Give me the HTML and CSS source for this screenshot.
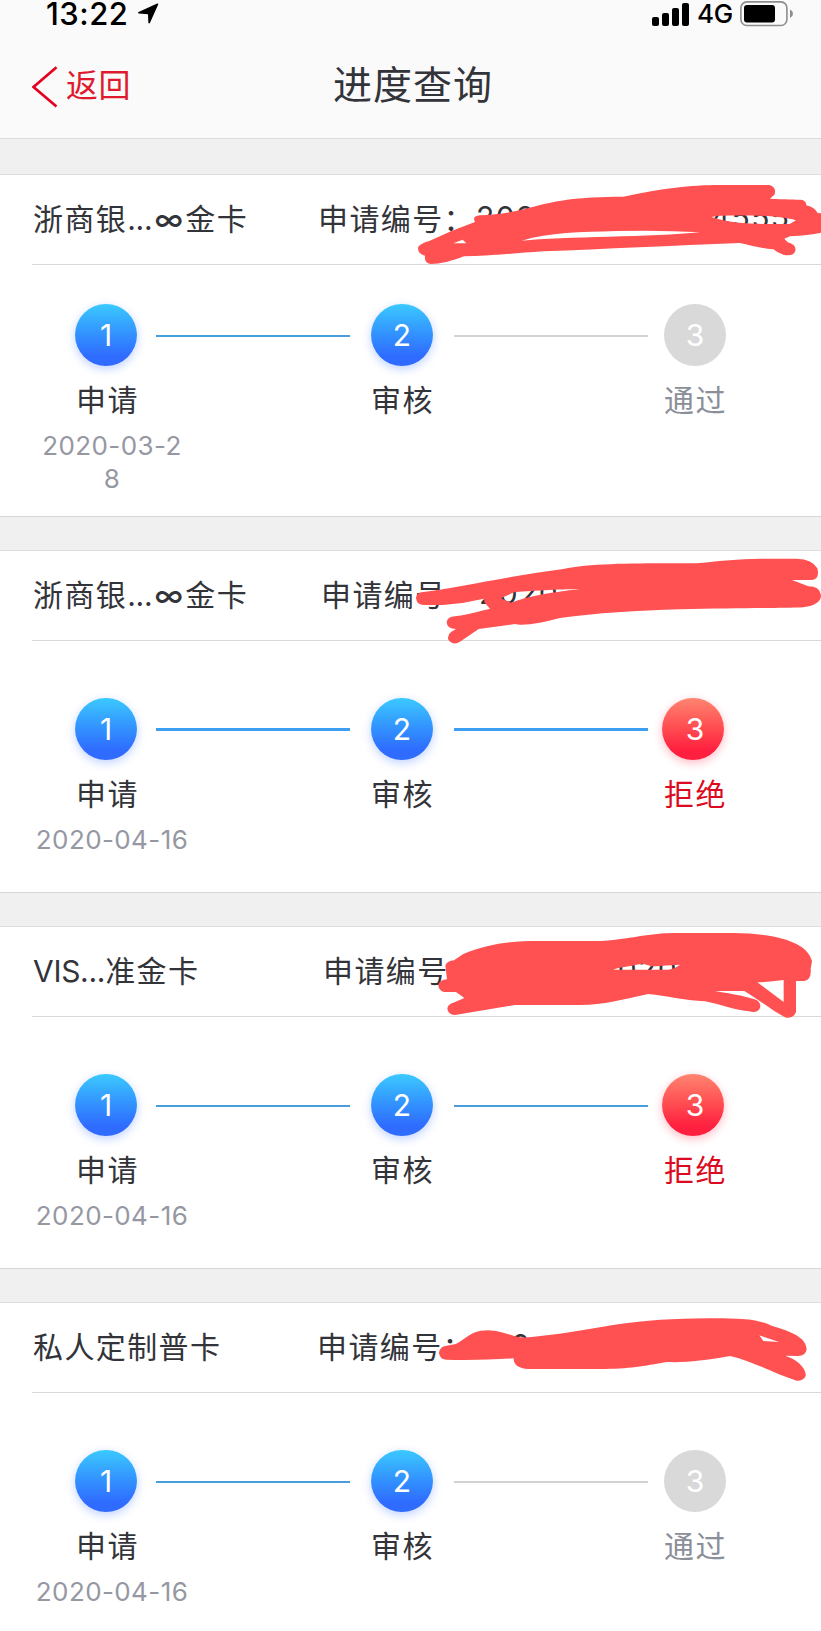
FILE: index.html
```html
<!DOCTYPE html>
<html lang="zh-CN">
<head>
<meta charset="utf-8">
<title>进度查询</title>
<link rel="stylesheet" href="styles.css">
</head>
<body>
<header class="top">
  <div class="status">
    <span class="time">13:22</span>
    <svg class="arrow" width="22" height="22" viewBox="0 0 22 22"><path d="M20.200 .6Q21.600.2 21.200 1.600L13 19.800Q12 21.400 11.300 19.600L11 11.200 1.600 10.600Q.2 9.800 1.600 8.900Z"/></svg>
    <svg class="signal" width="38" height="23" viewBox="0 0 38 23"><rect y="14" width="7" height="9" rx="2"/><rect x="10" y="10" width="7" height="13" rx="2"/><rect x="20" y="5" width="7" height="18" rx="2"/><rect x="30" width="7" height="23" rx="2"/></svg>
    <span class="net">4G</span>
    <svg class="battery" width="54" height="26" viewBox="0 0 54 26"><rect x=".9" y=".9" width="46" height="23.600" rx="6" fill="none" stroke="#8e8e8e" stroke-width="1.600"/><rect x="4" y="4" width="31" height="17.500" rx="3"/><path d="M50 8.500Q53 10 53 12.700T50 17Z" fill="#8e8e8e"/></svg>
  </div>
  <nav class="nav">
    <a class="back"><svg width="26" height="42" viewBox="0 0 26 42"><path d="M24.500 1.200 1.500 21 24.500 40.500" fill="none" stroke="#e60020" stroke-width="2.700"/></svg><span>返回</span></a>
    <h1 class="title">进度查询</h1>
  </nav>
</header>
<main class="list">
  <section class="card first">
    <div class="head"><span class="name">浙商银<span class="lat">...</span><span class="inf">∞</span>金卡</span><span class="no">申请编号：</span><span class="digits">202</span><span class="digits tail-a">4555</span></div>
    <div class="rail"><i class="dot">1</i><i class="line"></i><i class="dot">2</i><i class="line off"></i><i class="dot off">3</i></div>
    <div class="labels"><span>申请</span><span>审核</span><span class="mute">通过</span></div>
    <div class="date">2020-03-28</div>
    <svg class="mark m1" width="421" height="110" viewBox="0 0 1263 330"><path fill-rule="evenodd" d="M225 156Q215 138 240 136C285 134 330 128 372 118C460 92 530 80 670 80C790 55 870 45 960 45H1108Q1132 53 1123 74L1110 86C1150 88 1190 88 1208 90Q1220 96 1219 106Q1245 113 1253 129L1263 130V188Q1225 196 1170 199L1153 206 1163 217Q1190 224 1186 243Q1180 260 1150 254Q1130 247 1120 238C1085 235 1050 226 1020 219C820 227 610 237 430 244C340 250 270 257 192 259C155 274 120 282 92 282Q72 280 75 257Q50 250 55 230Q64 219 88 213Q154 181 225 156ZM365 212C450 186 540 187 650 183Q790 180 900 187C760 201 490 200 365 212ZM934 141C1000 165 1090 162 1169 162L1188 151C1120 132 1010 137 956 137ZM160 220 188 209 199 220Z"/></svg>
  </section>
  <section class="card thick">
    <div class="head"><span class="name">浙商银<span class="lat">...</span><span class="inf">∞</span>金卡</span><span class="no">申请编号</span><span class="digits">2020</span></div>
    <div class="rail"><i class="dot">1</i><i class="line"></i><i class="dot">2</i><i class="line"></i><i class="dot fail">3</i></div>
    <div class="labels"><span>申请</span><span>审核</span><span class="bad">拒绝</span></div>
    <div class="date">2020-04-16</div>
    <svg class="mark m2" width="421" height="120" viewBox="0 0 1263 360"><path fill-rule="evenodd" d="M64 157C180 142 330 107 490 87C580 68 740 70 890 70C970 62 1010 57 1080 56H1190Q1238 58 1252 85Q1260 117 1236 120H1176L1225 139Q1260 139 1263 166Q1263 195 1210 202C1130 205 1000 204 840 208C710 212 590 219 480 234C430 248 370 259 345 252L236 267 180 305Q160 318 145 299Q141 285 153 276L168 267Q140 266 140 246Q143 230 165 229C215 222 240 213 270 206L254 188 252 176Q190 191 128 195H70Q48 194 48 172Q52 159 64 157ZM302 175 333 188C390 167 450 158 540 147C480 148 380 152 342 157Z"/></svg>
  </section>
  <section class="card third">
    <div class="head"><span class="name"><span class="lat">VIS...</span>准金卡</span><span class="no">申请编号</span><span class="digits tail-c">2020</span></div>
    <div class="rail"><i class="dot">1</i><i class="line"></i><i class="dot">2</i><i class="line"></i><i class="dot fail">3</i></div>
    <div class="labels"><span>申请</span><span>审核</span><span class="bad">拒绝</span></div>
    <div class="date">2020-04-16</div>
    <svg class="mark m3" width="421" height="110" viewBox="0 0 1263 330"><path fill-rule="evenodd" d="M136 136Q142 122 162 121L190 102C270 70 330 63 420 63H600C690 58 740 40 820 39H1000C1130 40 1225 68 1236 124L1232 146Q1235 180 1213 183H1188V276Q1180 296 1158 293C1120 275 1080 241 1033 213H945C1000 222 1050 232 1070 240Q1088 254 1077 269Q1068 280 1047 274C1000 269 960 253 915 244C850 240 800 228 745 222C670 238 610 255 540 255H345L165 285Q143 284 142 265Q145 251 160 248L193 234 168 216H132Q114 211 115 193Q120 180 141 178ZM640 149H800C825 148 830 140 840 134C800 135 770 139 755 139L728 131C690 138 650 143 640 149ZM1072 187 1151 246V180Q1110 186 1072 187Z"/></svg>
  </section>
  <section class="card fourth">
    <div class="head"><span class="name">私人定制普卡</span><span class="no">申请编号：</span><span class="digits tail-d">0</span><span class="digits tail-e">0</span><span class="digits tail-f">2</span></div>
    <div class="rail"><i class="dot">1</i><i class="line"></i><i class="dot">2</i><i class="line off"></i><i class="dot off">3</i></div>
    <div class="labels"><span>申请</span><span>审核</span><span class="mute">通过</span></div>
    <div class="date">2020-04-16</div>
    <svg class="mark m4" width="421" height="120" viewBox="0 0 1263 360"><path fill-rule="evenodd" d="M132 169 167 162C190 151 210 127 242 122Q280 117 310 128L350 140Q370 144 395 141C520 130 620 104 730 94C830 84 920 84 1010 86C1060 87 1080 93 1115 107C1160 121 1218 137 1220 178Q1217 198 1195 198L1155 197C1190 207 1220 235 1217 258Q1210 273 1190 272C1120 250 1060 214 990 198C910 212 860 218 800 216C730 228 690 237 600 237H385Q340 234 341 205C280 209 210 211 138 209Q118 206 117 188Q119 174 132 169ZM1078 136 1090 153 1137 156Z"/></svg>
  </section>
</main>
</body>
</html>
```
FILE: styles.css
```css
* { box-sizing: border-box; }
body {
  margin: 0;
  width: 821px;
  height: 1631px;
  overflow: hidden;
  background: #f0f0f0;
  color: #33343a;
  font-family: Inter, "Noto Sans CJK SC", sans-serif;
}
svg { display: block; flex: none; }
.top {
  height: 139px;
  background: #fafafa;
  border-bottom: 1px solid #dcdcdc;
}
.status { display: flex; align-items: center; height: 28px; padding-left: 46px; color: #000; }
.time { flex: none; width: 84px; font-size: 31px; font-weight: 550; line-height: 28px; letter-spacing: 0.5px; white-space: nowrap; }
.arrow { flex: none; margin-left: 7px; }
.signal { margin-left: 493px; }
.net { flex: none; width: 37px; margin-left: 7px; font-size: 26px; font-weight: 450; line-height: 28px; letter-spacing: -0.2px; }
.battery { margin-left: 6px; }
.nav { display: flex; align-items: center; height: 110px; padding: 6px 0 0 32px; }
.back { display: flex; align-items: center; gap: 8px; width: 301px; height: 84px; color: #df1a2e; font-size: 32px; line-height: 84px; font-weight: 400; letter-spacing: 0.5px; }
.back svg { margin-top: 2px; }
.title { margin: 0 0 3px; font-size: 39px; font-weight: 400; letter-spacing: 1px; line-height: 60px; }
.list { padding-top: 35px; }
.card {
  position: relative;
  height: 343px;
  margin-bottom: 33px;
  background: #fff;
  border-top: 1px solid #dcdcdc;
  border-bottom: 1px solid #d6d6d6;
}
.head {
  display: flex;
  align-items: center;
  height: 90px;
  margin-left: 32px;
  padding-bottom: 5px;
  border-bottom: 1px solid #d9d9d9;
  font-size: 30px;
  font-weight: 400;
  letter-spacing: 1.4px;
  white-space: nowrap;
}
.name { flex: none; width: 285px; margin-left: 1px; }
.thick .name { width: 288px; }
.third .name { width: 290px; }
.fourth .name { width: 284px; }
.lat { letter-spacing: -0.3px; }
.inf { display: inline-block; width: 33px; font-weight: 500; letter-spacing: 0; text-align: center; }
.no { flex: none; width: 158px; }
.thick .no { width: 158px; }
.third .no { width: 130px; }
.tail-a { margin-left: 175px; }
.tail-c { margin-left: 145px; }
.tail-d { margin-left: 36px; }
.tail-e { margin-left: 162px; }
.tail-f { margin-left: 22px; }
.rail { display: flex; align-items: center; height: 62px; margin: 57px 0 0 75px; }
.thick .rail { margin-top: 56.500px; }
.first .rail { margin-top: 39px; }
.dot {
  flex: none;
  width: 62px;
  height: 62px;
  border-radius: 50%;
  background: linear-gradient(#3bc9ff, #3290ff 50%, #2f6bff 85%);
  box-shadow: 0 3px 10px rgba(47, 107, 255, .3);
  color: #fff;
  font-size: 30px;
  font-style: normal;
  line-height: 62px;
  text-align: center;
  font-weight: 400;
}
.line { flex: none; width: 194px; height: 2px; margin: 2px 21px 0 19px; background: #4a9ddb; }
.dot + .line ~ .line { margin: 2px 16px 0 21px; }
.thick .line { height: 3px; background: #3e9ff2; }
.line.off { background: #d2d2d2; }
.dot.off { background: #d9d9d9; box-shadow: none; }
.dot.fail { margin-left: -2px; padding-left: 4px; background: linear-gradient(#ff8570, #ff4a50 50%, #ff1f3f 85%); box-shadow: 0 3px 10px rgba(255, 31, 63, .3); }
.labels {
  display: flex;
  gap: 233px;
  margin: 12px 0 0 76px;
  font-size: 30px;
  font-weight: 400;
  line-height: 44px;
}
.labels span { width: 62px; letter-spacing: 1.4px; white-space: nowrap; }
.labels span:last-child { margin-left: -2px; }
.mute { color: #8a8f99; }
.bad { color: #dc0a20; }
.date {
  width: 156px;
  margin: 7px 0 0 34px;
  color: #9598a2;
  font-size: 26px;
  font-weight: 400;
  line-height: 33px;
  letter-spacing: 0.4px;
  text-align: center;
  word-break: break-all;
}
.first .date { width: 142px; margin-left: 41px; }
.mark { position: absolute; left: 400px; fill: #ff5151; }
.m1 { top: -5px; }
.m2 { top: -11px; }
.m3 { top: -7px; }
.m4 { top: -13px; }
```
